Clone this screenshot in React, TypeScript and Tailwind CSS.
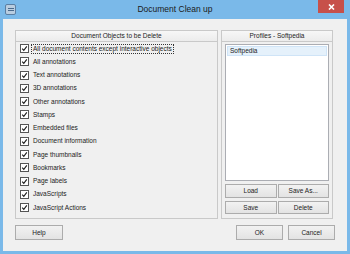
import React from "react";

const items = [
  "All document contents except interactive objects",
  "All annotations",
  "Text annotations",
  "3D annotations",
  "Other annotations",
  "Stamps",
  "Embedded files",
  "Document information",
  "Page thumbnails",
  "Bookmarks",
  "Page labels",
  "JavaScripts",
  "JavaScript Actions",
];

const Check = () => (
  <span className="flex h-[9px] w-[9px] shrink-0 items-center justify-center border border-[#555] bg-white">
    <svg width="7" height="7" viewBox="0 0 7 7">
      <path d="M1.2 3.6 L2.8 5.3 L5.8 1.4" fill="none" stroke="#1a1a1a" strokeWidth="1.1" />
    </svg>
  </span>
);

const Button = ({ label, className }: { label: string; className: string }) => (
  <div
    className={`flex items-center justify-center border border-[#acacac] bg-gradient-to-b from-[#f2f2f2] to-[#e3e3e3] text-[6.5px] text-[#222] ${className}`}
  >
    {label}
  </div>
);

const GroupHeader = ({ title }: { title: string }) => (
  <div className="flex h-[11px] items-center justify-center border-b border-[#c9c9c9] bg-gradient-to-b from-[#f7f7f7] to-[#ececec] text-[6.5px] text-[#222]">
    {title}
  </div>
);

export default function App() {
  return (
    <div
      className="flex h-[254px] w-[350px] flex-col bg-[#7ab9e9]"
      style={{ fontFamily: '"Liberation Sans", Arial, sans-serif' }}
    >
      {/* Title bar */}
      <div className="relative flex h-[19px] items-center justify-center">
        <div className="absolute left-[5px] top-[4px] flex h-[11px] w-[11px] flex-col items-center justify-center gap-[1px] rounded-[2px] border border-[#5b7fa3] bg-[#b9cde0]">
          <span className="h-[1px] w-[6px] bg-[#4a6a8c]" />
          <span className="h-[1px] w-[6px] bg-[#4a6a8c]" />
        </div>
        <span className="text-[8.5px] text-[#1a1a1a]">Document Clean up</span>
        <div className="absolute right-[6px] top-0 flex h-[13px] w-[26px] items-center justify-center bg-[#c7504a]">
          <svg width="7" height="6" viewBox="0 0 7 6">
            <path d="M1 0.5 L6 5.5 M6 0.5 L1 5.5" stroke="#fff" strokeWidth="1.6" />
          </svg>
        </div>
      </div>

      {/* Client area */}
      <div className="mx-[3px] mb-[3px] flex flex-1 flex-col bg-[#f0f0f0] px-[12px] pt-[11px]">
        <div className="flex h-[189px] gap-[3px]">
          {/* Left group */}
          <div className="flex w-[203px] flex-col border border-[#c9c9c9]">
            <GroupHeader title="Document Objects to be Delete" />
            <div className="flex flex-col pl-[4px]">
              {items.map((item, i) => (
                <div key={item} className="flex h-[13.25px] items-center gap-[2px]">
                  <Check />
                  <span
                    className={`px-[1px] text-[6.5px] leading-[8px] text-[#222] ${
                      i === 0 ? "border border-dotted border-[#333]" : "border border-transparent"
                    }`}
                  >
                    {item}
                  </span>
                </div>
              ))}
            </div>
          </div>

          {/* Right group */}
          <div className="flex w-[112px] flex-col border border-[#c9c9c9]">
            <GroupHeader title="Profiles - Softpedia" />
            <div className="flex flex-1 flex-col px-[3px] pt-[2px] pb-[4px]">
              <div className="h-[137px] border border-[#abadb3] bg-white p-[1px]">
                <div className="flex h-[10px] items-center border border-[#cfe4f7] bg-[#e5f1fb] pl-[2px] text-[6.5px] text-[#222]">
                  Softpedia
                </div>
              </div>
              <div className="mt-[3px] flex gap-[1px]">
                <Button label="Load" className="h-[14px] flex-1" />
                <Button label="Save As..." className="h-[14px] flex-1" />
              </div>
              <div className="mt-[3px] flex gap-[1px]">
                <Button label="Save" className="h-[13px] flex-1" />
                <Button label="Delete" className="h-[13px] flex-1" />
              </div>
            </div>
          </div>
        </div>

        {/* Bottom buttons */}
        <div className="mt-[6px] flex items-center">
          <Button label="Help" className="h-[15px] w-[48px]" />
          <div className="flex-1" />
          <Button label="OK" className="h-[15px] w-[47px]" />
          <Button label="Cancel" className="ml-[5px] h-[15px] w-[47px]" />
        </div>
      </div>
    </div>
  );
}
